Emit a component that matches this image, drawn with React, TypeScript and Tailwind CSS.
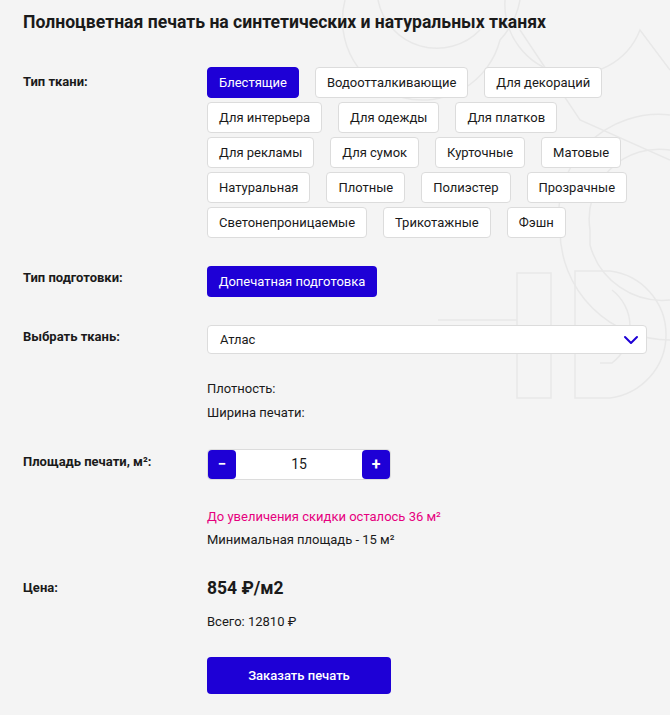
import { ChevronDown } from 'lucide-react';

const fabrics = [
  'Блестящие',
  'Водоотталкивающие',
  'Для декораций',
  'Для интерьера',
  'Для одежды',
  'Для платков',
  'Для рекламы',
  'Для сумок',
  'Курточные',
  'Матовые',
  'Натуральная',
  'Плотные',
  'Полиэстер',
  'Прозрачные',
  'Светонепроницаемые',
  'Трикотажные',
  'Фэшн',
];

function Label({ children }: { children: React.ReactNode }) {
  return (
    <div className="w-[184px] shrink-0 text-[13px] font-bold leading-4 text-[#1a1a1a]">
      {children}
    </div>
  );
}

export default function App() {
  return (
    <div
      className="relative h-[715px] w-[670px] overflow-hidden bg-[#f4f4f4] text-[#1a1a1a]"
      style={{ fontFamily: 'Roboto, "Noto Sans", sans-serif' }}
    >
      {/* watermark */}
      <svg
        className="pointer-events-none absolute left-0 top-0"
        width="670"
        height="715"
        fill="none"
        stroke="#e8e8e8"
        strokeWidth="1.5"
      >
        <path d="M345 0 A 80 80 0 0 0 500 40 A 80 80 0 0 0 520 0" />
        <path d="M378 0 A 60 60 0 0 0 480 30" />
        <path d="M505 0 A 70 70 0 0 0 640 30 L 670 70" />
        <path d="M520 30 L 580 120 L 670 160" />
        <path d="M670 115 A 100 100 0 0 0 560 230" />
        <path d="M670 150 A 70 70 0 0 0 590 230 L 590 245" />
        <path d="M560 230 A 110 110 0 0 0 670 340" />
        <path d="M590 245 A 75 75 0 0 0 670 300" />
        <path d="M438 320 L 517 320 M517 273 L 551 273 L 551 398 L 517 398 Z" />
        <path d="M575 398 L 575 271 L 610 271 A 64 64 0 0 1 610 398 Z" />
        <path d="M600 363 L 612 363 A 46 46 0 0 0 612 290" />
      </svg>

      <div className="relative px-[23px] pt-[12px]">
        <h1 className="text-[17.6px] font-bold leading-[20px] text-[#1a1a1a]">
          Полноцветная печать на синтетических и натуральных тканях
        </h1>

        <div className="mt-[35px] flex">
          <div className="pt-[7px]">
            <Label>Тип ткани:</Label>
          </div>
          <div className="flex w-[440px] flex-wrap gap-x-[16px] gap-y-[4px]">
            {fabrics.map((f, i) => (
              <button
                key={f}
                className={
                  i === 0
                    ? 'h-[31px] rounded-[4px] border border-[#1e00d6] bg-[#1e00d6] px-[11px] text-[13px] text-white'
                    : 'h-[31px] rounded-[4px] border border-[#dcdcdc] bg-white px-[11px] text-[13px] text-[#1a1a1a]'
                }
              >
                {f}
              </button>
            ))}
          </div>
        </div>

        <div className="mt-[28px] flex">
          <div className="pt-[4px]">
            <Label>Тип подготовки:</Label>
          </div>
          <button className="h-[31px] w-[170px] rounded-[4px] bg-[#1e00d6] text-[13px] text-white">
            Допечатная подготовка
          </button>
        </div>

        <div className="mt-[28px] flex">
          <div className="pt-[4px]">
            <Label>Выбрать ткань:</Label>
          </div>
          <div className="flex h-[29px] w-[440px] items-center justify-between rounded-[4px] border border-[#dcdcdc] bg-white pl-[12px] pr-[3px] text-[13px]">
            <span>Атлас</span>
            <ChevronDown size={24} strokeWidth={2} className="text-[#1e00d6]" />
          </div>
        </div>

        <div className="ml-[184px] mt-[27px] flex flex-col gap-[8px] text-[13px] leading-[16px]">
          <div>Плотность:</div>
          <div>Ширина печати:</div>
        </div>

        <div className="mt-[28px] flex">
          <div className="pt-[5px]">
            <Label>Площадь печати, м²:</Label>
          </div>
          <div className="flex h-[31px] w-[184px] items-stretch rounded-[4px] border border-[#dcdcdc] bg-white">
            <button className="flex w-[28px] items-center justify-center rounded-[4px] bg-[#1e00d6] text-[15px] font-bold text-white">
              −
            </button>
            <div className="flex flex-1 items-center justify-center text-[14px]">15</div>
            <button className="flex w-[28px] items-center justify-center rounded-[4px] bg-[#1e00d6] text-[16px] font-bold text-white">
              +
            </button>
          </div>
        </div>

        <div className="ml-[184px] mt-[29px] flex flex-col gap-[7px] text-[13px] leading-[16px]">
          <div className="text-[#e6007e]">До увеличения скидки осталось 36 м²</div>
          <div>Минимальная площадь - 15 м²</div>
        </div>

        <div className="mt-[29px] flex">
          <div className="pt-[3px]">
            <Label>Цена:</Label>
          </div>
          <div className="flex flex-col">
            <div className="text-[17.5px] font-bold leading-[22px]">854 ₽/м2</div>
            <div className="mt-[15px] text-[13px] leading-[16px]">Всего: 12810 ₽</div>
          </div>
        </div>

        <div className="ml-[184px] mt-[27px]">
          <button className="h-[37px] w-[184px] rounded-[4px] bg-[#1e00d6] text-[13px] font-medium text-white">
            Заказать печать
          </button>
        </div>
      </div>
    </div>
  );
}
